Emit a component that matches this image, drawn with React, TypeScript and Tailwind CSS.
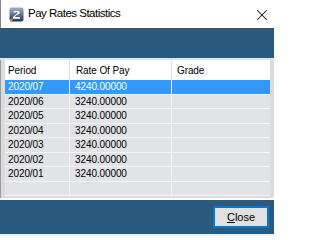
import { X } from "lucide-react"

type Row = { period: string; rate: string; grade: string }

const rows: Row[] = [
  { period: "2020/07", rate: "4240.00000", grade: "" },
  { period: "2020/06", rate: "3240.00000", grade: "" },
  { period: "2020/05", rate: "3240.00000", grade: "" },
  { period: "2020/04", rate: "3240.00000", grade: "" },
  { period: "2020/03", rate: "3240.00000", grade: "" },
  { period: "2020/02", rate: "3240.00000", grade: "" },
  { period: "2020/01", rate: "3240.00000", grade: "" },
  { period: "", rate: "", grade: "" },
]

function AppIcon() {
  return (
    <svg width="15" height="15" viewBox="0 0 15 15">
      <defs>
        <linearGradient id="ig" x1="0" y1="0" x2="0" y2="1">
          <stop offset="0" stopColor="#9fb3cc" />
          <stop offset="1" stopColor="#22344f" />
        </linearGradient>
      </defs>
      <rect x="0.5" y="0.5" width="14" height="14" rx="2" fill="url(#ig)" />
      <path d="M4 5.2 C4.5 3.4 10.5 3 10.8 5.3 C11 7 7.5 8 5.6 10 H11 V11.8 H3.8 V10.4 C5.5 8.3 9 7 8.6 5.6 C8.3 4.6 6.3 4.8 5.8 5.8 Z" fill="#ffffff" />
      <path d="M1 12 L4 12 L3 14.5 L1 14.5 Z" fill="#e8773a" />
    </svg>
  )
}

export default function App() {
  return (
    <div className="w-[274px] h-[236px] flex flex-col bg-[#f0f0f0] overflow-hidden font-['Liberation_Sans',Arial,sans-serif]">
      {/* title bar */}
      <div className="h-[28px] shrink-0 flex items-center bg-white border-l border-[#8a8a8a]">
        <div className="ml-[8px] mt-[1px]">
          <AppIcon />
        </div>
        <span className="ml-[4px] text-[11.5px] tracking-[-0.5px] text-black">Pay Rates Statistics</span>
        <X className="ml-auto mr-[3px] mt-[1px] w-[18px] h-[18px] text-[#111]" strokeWidth={1.4} />
      </div>

      {/* top band */}
      <div className="h-[30px] shrink-0 bg-[#2a5a7e]" />
      <div className="h-[2px] shrink-0 bg-[#e4e4e4]" />

      {/* grid */}
      <div className="h-[138px] shrink-0 flex bg-[#dcdcdc] border-l border-[#9a9a9a]">
        <div className="ml-[4px] w-[265px] flex flex-col">
          <div className="h-[20px] flex bg-white text-[10px] tracking-[-0.1px] text-black">
            <div className="w-[65px] flex items-center pl-[3px] border-r border-[#dedede]">Period</div>
            <div className="w-[102px] flex items-center pl-[6px] border-r border-[#dedede]">Rate Of Pay</div>
            <div className="flex-1 flex items-center pl-[5px]">Grade</div>
          </div>
          {rows.map((r, i) => {
            const sel = i === 0
            return (
              <div
                key={i}
                className={
                  sel
                    ? "h-[14.5px] flex text-[10px] tracking-[-0.1px] bg-[#3399ff] text-white border-b border-[#f4f4f4]"
                    : "h-[14.5px] flex text-[10px] tracking-[-0.1px] bg-[#e1e3e6] text-black border-b border-[#f4f4f4]"
                }
              >
                <div className="w-[65px] flex items-center pl-[3px] border-r border-[#f4f4f4]">{r.period}</div>
                <div className="w-[102px] flex items-center pl-[5px] border-r border-[#f4f4f4]">{r.rate}</div>
                <div className="flex-1 flex items-center pl-[5px]">{r.grade}</div>
              </div>
            )
          })}
        </div>
      </div>

      <div className="h-[2px] shrink-0 bg-white" />

      {/* bottom band */}
      <div className="h-[34px] shrink-0 bg-[#2a5a7e] flex items-center justify-end pr-[5px]">
        <button className="w-[56px] h-[22px] bg-[#e1e1e1] border-2 border-[#0078d7] text-[11px] text-black flex items-center justify-center">
          <span>
            <span className="underline">C</span>lose
          </span>
        </button>
      </div>
      <div className="flex-1 bg-[#f0f0f0]" />
    </div>
  )
}
